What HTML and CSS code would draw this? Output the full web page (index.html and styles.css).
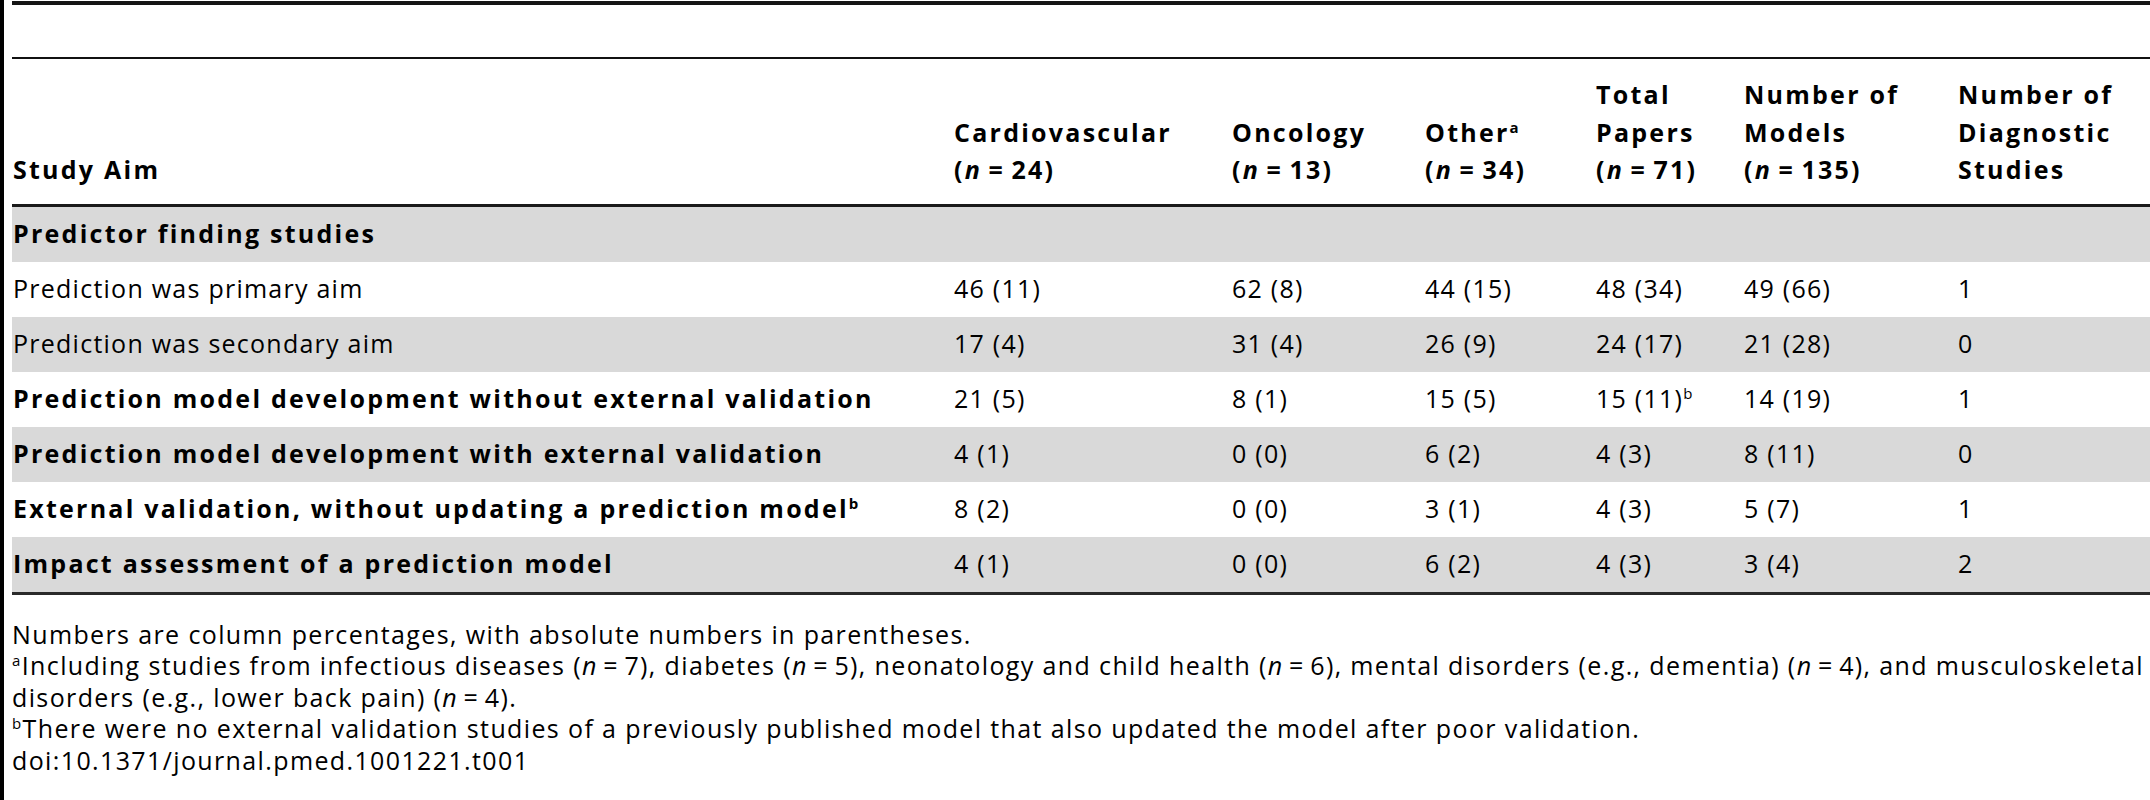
FILE: index.html
```html
<!DOCTYPE html>
<html lang="en">
<head>
    <meta charset="UTF-8">
    <meta name="viewport" content="width=device-width, initial-scale=1.0">
    <title>Table 1. Study aims by clinical domain</title>
    <link rel="stylesheet" href="styles.css">
</head>
<body>
    <div class="Frame">
        <div class="Caption"></div>
        <table class="Studies">
            <colgroup>
                <col class="ColAim">
                <col class="ColCardio">
                <col class="ColOnco">
                <col class="ColOther">
                <col class="ColTotal">
                <col class="ColModels">
                <col class="ColDiag">
            </colgroup>
            <thead>
                <tr>
                    <th>Study Aim</th>
                    <th>Cardiovascular<br>(<i>n</i>&thinsp;=&thinsp;24)</th>
                    <th>Oncology<br>(<i>n</i>&thinsp;=&thinsp;13)</th>
                    <th>Other<sup>a</sup><br>(<i>n</i>&thinsp;=&thinsp;34)</th>
                    <th>Total<br>Papers<br>(<i>n</i>&thinsp;=&thinsp;71)</th>
                    <th>Number of<br>Models<br>(<i>n</i>&thinsp;=&thinsp;135)</th>
                    <th>Number of<br>Diagnostic<br>Studies</th>
                </tr>
            </thead>
            <tbody>
                <tr class="Shade">
                    <td class="Aim">Predictor finding studies</td>
                    <td></td><td></td><td></td><td></td><td></td><td></td>
                </tr>
                <tr>
                    <td>Prediction was primary aim</td>
                    <td>46 (11)</td><td>62 (8)</td><td>44 (15)</td><td>48 (34)</td><td>49 (66)</td><td>1</td>
                </tr>
                <tr class="Shade">
                    <td>Prediction was secondary aim</td>
                    <td>17 (4)</td><td>31 (4)</td><td>26 (9)</td><td>24 (17)</td><td>21 (28)</td><td>0</td>
                </tr>
                <tr>
                    <td class="Aim">Prediction model development without external validation</td>
                    <td>21 (5)</td><td>8 (1)</td><td>15 (5)</td><td>15 (11)<sup>b</sup></td><td>14 (19)</td><td>1</td>
                </tr>
                <tr class="Shade">
                    <td class="Aim">Prediction model development with external validation</td>
                    <td>4 (1)</td><td>0 (0)</td><td>6 (2)</td><td>4 (3)</td><td>8 (11)</td><td>0</td>
                </tr>
                <tr>
                    <td class="Aim">External validation, without updating a prediction model<sup>b</sup></td>
                    <td>8 (2)</td><td>0 (0)</td><td>3 (1)</td><td>4 (3)</td><td>5 (7)</td><td>1</td>
                </tr>
                <tr class="Shade">
                    <td class="Aim">Impact assessment of a prediction model</td>
                    <td>4 (1)</td><td>0 (0)</td><td>6 (2)</td><td>4 (3)</td><td>3 (4)</td><td>2</td>
                </tr>
            </tbody>
        </table>
        <div class="Notes">
            <p>Numbers are column percentages, with absolute numbers in parentheses.</p>
            <p><sup>a</sup>Including studies from infectious diseases (<i>n</i>&thinsp;=&thinsp;7), diabetes (<i>n</i>&thinsp;=&thinsp;5), neonatology and child health (<i>n</i>&thinsp;=&thinsp;6), mental disorders (e.g., dementia) (<i>n</i>&thinsp;=&thinsp;4), and musculoskeletal disorders (e.g., lower back pain) (<i>n</i>&thinsp;=&thinsp;4).</p>
            <p><sup>b</sup>There were no external validation studies of a previously published model that also updated the model after poor validation.</p>
            <p>doi:10.1371/journal.pmed.1001221.t001</p>
        </div>
    </div>
</body>
</html>
```

FILE: styles.css
```css
body, html {
    margin: 0;
    height: 100%;
    background-color: #fff;
    color: #000;
    overflow: hidden;
}

.Frame {
    font-family: "Open Sans", "Liberation Sans", sans-serif;
    border-left: 4px solid #000;
    padding: 1px 0 0 8px;
    min-height: 100%;
    box-sizing: border-box;
    width: 2200px;
}

.Caption {
    border-top: 4px solid #151515;
    height: 52px;
}

.Studies {
    border-collapse: collapse;
    table-layout: fixed;
    width: 2188px;
    border-top: 2px solid #111;
    border-bottom: 3px solid #2a2a2a;
    font-size: 25px;
    letter-spacing: 0.05em;
    line-height: 37.5px;
}

.ColAim { width: 941px; }
.ColCardio { width: 278px; }
.ColOnco { width: 193px; }
.ColOther { width: 171px; }
.ColTotal { width: 148px; }
.ColModels { width: 214px; }
.ColDiag { width: 243px; }

.Studies th {
    text-align: left;
    vertical-align: bottom;
    font-weight: 700;
    letter-spacing: 0.09em;
    padding: 17px 4px 15px 1px;
    border-bottom: 3px solid #1a1a1a;
}

.Studies td {
    height: 55px;
    padding: 0 4px 0 1px;
    vertical-align: middle;
    white-space: nowrap;
}

.Studies .Aim {
    font-weight: 700;
    letter-spacing: 0.09em;
}

.Shade td {
    background-color: #d9d9d9;
}

sup {
    font-size: 0.6em;
    line-height: 0;
    vertical-align: 0.6em;
}

.Notes {
    width: 2160px;
    font-size: 25px;
    letter-spacing: 0.055em;
    line-height: 31.6px;
    padding-top: 24px;
}

.Notes p {
    margin: 0;
}
```
